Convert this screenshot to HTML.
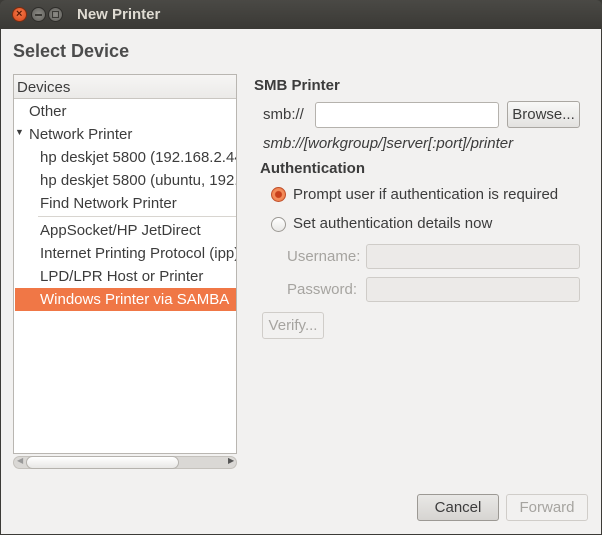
<!DOCTYPE html>
<html><head><style>
*{margin:0;padding:0;box-sizing:border-box}
body{width:602px;height:535px;overflow:hidden;background:#3c3b37;font-family:"Liberation Sans",sans-serif;font-size:15px;color:#3c3c3c;position:relative}
.a{position:absolute;white-space:nowrap}
#tb{left:0;top:0;width:602px;height:29px;background:linear-gradient(#4a4945,#3a3935);border-radius:6px 6px 0 0}
#body{left:1px;top:29px;width:600px;height:505px;background:#f2f1f0}
.circ{width:15px;height:15px;border-radius:50%;top:7px}
.btn{border:1px solid #aaa7a2;border-radius:3px;background:linear-gradient(#f8f8f7,#e3e2e0);text-align:center}
.ent{border:1px solid #b5b2ad;border-radius:3px;background:#fff}
.dis{border:1px solid #cfccc8;border-radius:3px;background:#eceae8}
.row{left:15px;width:221px;height:23px;line-height:23px;overflow:hidden}
</style></head><body>
<div class="a" id="tb"></div>
<div class="a circ" style="left:12px;background:radial-gradient(circle at 50% 40%,#f47a4a,#d9461a);border:1px solid #7a2c10"></div>
<div class="a" style="left:16px;top:7px;color:#5a1a05;font-size:11px;font-weight:bold;line-height:14px">×</div>
<div class="a circ" style="left:31px;background:radial-gradient(#8d8c87,#5f5e5a);border:1px solid #2e2d2a"></div>
<div class="a" style="left:35px;top:14px;width:7px;height:2px;background:#3a3935"></div>
<div class="a circ" style="left:48px;background:radial-gradient(#8d8c87,#5f5e5a);border:1px solid #2e2d2a"></div>
<div class="a" style="left:52px;top:11px;width:7px;height:7px;border:1px solid #3a3935"></div>
<div class="a" style="left:77px;top:6px;color:#dfdbd2;font-weight:bold;font-size:15px">New Printer</div>
<div class="a" id="body"></div>
<div class="a" style="left:13px;top:41px;font-size:18px;font-weight:bold;color:#4c4c4c">Select Device</div>

<div class="a" style="left:13px;top:74px;width:224px;height:380px;background:#fff;border:1px solid #b9b6b1"></div>
<div class="a" style="left:14px;top:75px;width:222px;height:24px;background:linear-gradient(#f6f5f4,#ebeae8);border-bottom:1px solid #c9c6c1"></div>
<div class="a" style="left:17px;top:79px">Devices</div>
<div class="a row" style="top:100px;padding-left:14px">Other</div>
<div class="a" style="left:15px;top:127px;font-size:9px">▼</div>
<div class="a row" style="top:123px;padding-left:14px">Network Printer</div>
<div class="a row" style="top:146px;padding-left:25px">hp deskjet 5800 (192.168.2.44)</div>
<div class="a row" style="top:169px;padding-left:25px">hp deskjet 5800 (ubuntu, 192.168.2.44)</div>
<div class="a row" style="top:192px;padding-left:25px">Find Network Printer</div>
<div class="a" style="left:38px;top:216px;width:198px;height:1px;background:#d8d5d0"></div>
<div class="a row" style="top:219px;padding-left:25px">AppSocket/HP JetDirect</div>
<div class="a row" style="top:242px;padding-left:25px">Internet Printing Protocol (ipp)</div>
<div class="a row" style="top:265px;padding-left:25px">LPD/LPR Host or Printer</div>
<div class="a row" style="top:288px;padding-left:25px;background:#f07746;color:#fff">Windows Printer via SAMBA</div>

<div class="a" style="left:13px;top:456px;width:224px;height:13px;border-radius:7px;background:#dad8d5;border:1px solid #c4c1bc"></div>
<div class="a" style="left:26px;top:456px;width:153px;height:13px;border-radius:7px;background:linear-gradient(#fff,#e8e7e5);border:1px solid #b5b2ad"></div>
<div class="a" style="left:17px;top:456px;font-size:8px;color:#999">◀</div>
<div class="a" style="left:228px;top:456px;font-size:8px;color:#555">▶</div>

<div class="a" style="left:254px;top:77px;font-weight:bold">SMB Printer</div>
<div class="a" style="left:263px;top:106px">smb://</div>
<div class="a ent" style="left:315px;top:102px;width:184px;height:26px"></div>
<div class="a btn" style="left:507px;top:101px;width:73px;height:27px;line-height:25px">Browse...</div>
<div class="a" style="left:263px;top:135px;font-style:italic">smb://[workgroup/]server[:port]/printer</div>
<div class="a" style="left:260px;top:160px;font-weight:bold">Authentication</div>
<div class="a" style="left:271px;top:187px;width:15px;height:15px;border-radius:50%;border:1px solid #c0502a;background:radial-gradient(#c8401c 0 3px,#f5915f 4px,#e8703f)"></div>
<div class="a" style="left:293px;top:186px">Prompt user if authentication is required</div>
<div class="a" style="left:271px;top:217px;width:15px;height:15px;border-radius:50%;border:1px solid #9c9994;background:linear-gradient(#fff,#e9e8e6)"></div>
<div class="a" style="left:293px;top:215px">Set authentication details now</div>
<div class="a" style="left:287px;top:248px;color:#a6a4a0">Username:</div>
<div class="a dis" style="left:366px;top:244px;width:214px;height:25px"></div>
<div class="a" style="left:287px;top:281px;color:#a6a4a0">Password:</div>
<div class="a dis" style="left:366px;top:277px;width:214px;height:25px"></div>
<div class="a" style="left:262px;top:312px;width:62px;height:27px;border:1px solid #d0cdc9;border-radius:3px;color:#a6a4a0;text-align:center;line-height:25px">Verify...</div>

<div class="a btn" style="left:417px;top:494px;width:82px;height:27px;line-height:25px;background:linear-gradient(#e9e8e6,#d6d4d1);border-color:#9c9994">Cancel</div>
<div class="a" style="left:506px;top:494px;width:82px;height:27px;line-height:25px;border:1px solid #d0cdc9;border-radius:3px;color:#a6a4a0;text-align:center">Forward</div>
</body></html>
